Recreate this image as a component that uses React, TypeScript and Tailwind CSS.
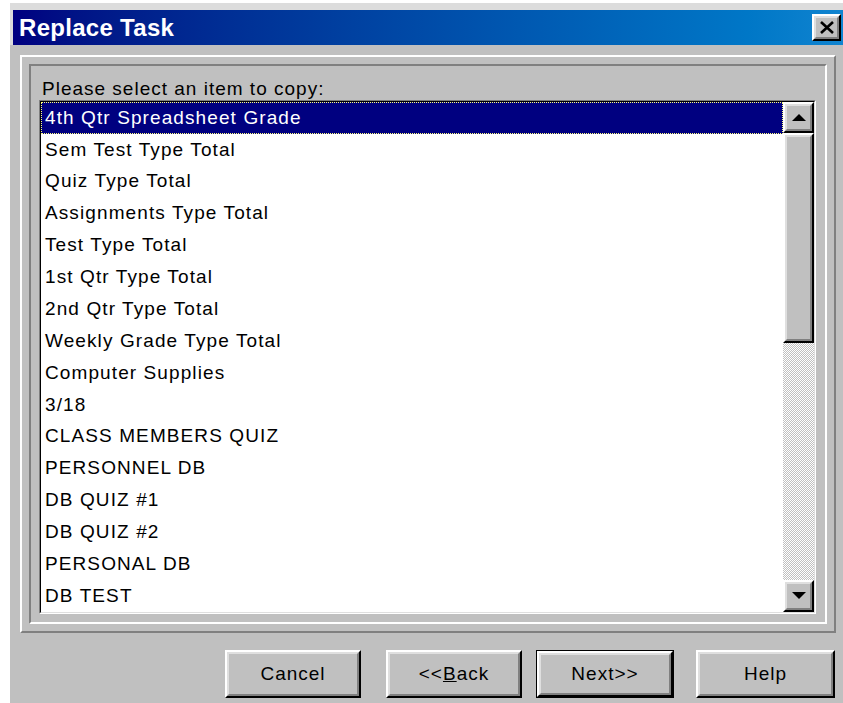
import React from "react";

const items = [
  "4th Qtr Spreadsheet Grade",
  "Sem Test Type Total",
  "Quiz Type Total",
  "Assignments Type Total",
  "Test Type Total",
  "1st Qtr Type Total",
  "2nd Qtr Type Total",
  "Weekly Grade Type Total",
  "Computer Supplies",
  "3/18",
  "CLASS MEMBERS QUIZ",
  "PERSONNEL DB",
  "DB QUIZ #1",
  "DB QUIZ #2",
  "PERSONAL DB",
  "DB TEST",
];

// classic raised 3d bevel used for buttons and scrollbar parts
const Raised = ({
  className = "",
  children,
}: {
  className?: string;
  children?: React.ReactNode;
}) => (
  <div
    className={`border-2 border-t-white border-l-white border-r-black border-b-black bg-[#c0c0c0] ${className}`}
  >
    <div className="flex h-full w-full items-center justify-center border-2 border-t-[#dfdfdf] border-l-[#dfdfdf] border-r-[#808080] border-b-[#808080]">
      {children}
    </div>
  </div>
);

const Arrow = ({ down }: { down?: boolean }) => (
  <svg width="14" height="8" viewBox="0 0 14 8">
    {down ? (
      <polygon points="0,0 14,0 7,7" fill="#000" />
    ) : (
      <polygon points="7,0 14,7 0,7" fill="#000" />
    )}
  </svg>
);

const DialogButton = ({
  label,
  width,
  isDefault,
}: {
  label: React.ReactNode;
  width: string;
  isDefault?: boolean;
}) =>
  isDefault ? (
    <div className={`h-[48px] ${width} border border-black`}>
      <Raised className="h-full w-full">
        <span className="text-[19px] tracking-[1px] text-black">{label}</span>
      </Raised>
    </div>
  ) : (
    <Raised className={`h-[48px] ${width}`}>
      <span className="text-[19px] tracking-[1px] text-black">{label}</span>
    </Raised>
  );

export default function App() {
  return (
    <div className="h-[703px] w-[843px] overflow-hidden bg-white pl-[10px] pt-[3px] font-['Liberation_Sans',Arial,sans-serif]">
      <div className="flex h-full flex-col bg-[#c0c0c0]">
        {/* window frame edge + title bar */}
        <div className="bg-[#dcdcdc] pl-[3px] pt-[7px]">
          <div className="flex h-[35px] items-center bg-gradient-to-r from-[#000080] to-[#1084d0] pl-[6px] pr-[2px]">
            <span className="text-[24px] font-bold leading-none tracking-[0.3px] text-white">
              Replace Task
            </span>
            <div className="ml-auto">
              <Raised className="h-[27px] w-[29px]">
                <svg width="14" height="13" viewBox="0 0 14 13">
                  <path
                    d="M1 1 L13 12 M13 1 L1 12"
                    stroke="#000"
                    strokeWidth="2.6"
                  />
                </svg>
              </Raised>
            </div>
          </div>
        </div>

        <div className="pl-[10px] pt-[10px]">
          {/* outer raised panel */}
          <div className="h-[578px] w-[816px] border-2 border-t-white border-l-white border-r-[#808080] border-b-[#808080] p-[7px]">
            {/* inner etched group */}
            <div className="h-full w-full border-2 border-t-[#808080] border-l-[#808080] border-r-white border-b-white pl-[8px] pt-[13px]">
              <div className="ml-[3px] h-[20px] text-[19px] leading-[20px] tracking-[1px] text-black">
                Please select an item to copy:
              </div>
              <div className="mt-[1px] h-[514px] w-[777px] border border-t-[#808080] border-l-[#808080] border-r-white border-b-white">
                <div className="flex h-full w-full border border-t-black border-l-black border-r-[#dfdfdf] border-b-[#dfdfdf] bg-white">
                  <div className="flex w-[742px] flex-col">
                    {items.map((item, i) =>
                      i === 0 ? (
                        <div
                          key={item}
                          className="flex h-[31.875px] items-center border border-dotted border-[#ffff80] bg-[#000080] pl-[3px] text-[19px] tracking-[1.1px] text-white"
                        >
                          {item}
                        </div>
                      ) : (
                        <div
                          key={item}
                          className="flex h-[31.875px] items-center pl-[4px] text-[19px] tracking-[1.1px] text-black"
                        >
                          {item}
                        </div>
                      ),
                    )}
                  </div>

                  {/* vertical scrollbar */}
                  <div className="flex w-[31px] flex-col">
                    <Raised className="h-[31px] w-[31px]">
                      <Arrow />
                    </Raised>
                    <Raised className="h-[210px] w-[31px]" />
                    <div className="flex-1 bg-[repeating-conic-gradient(#c0c0c0_0_25%,#ffffff_0_50%)] bg-[length:2px_2px]" />
                    <Raised className="h-[32px] w-[31px]">
                      <Arrow down />
                    </Raised>
                  </div>
                </div>
              </div>
            </div>
          </div>

          {/* dialog buttons */}
          <div className="ml-[205px] mt-[17px] flex items-center">
            <DialogButton label="Cancel" width="w-[136px]" />
            <div className="ml-[25px]">
              <DialogButton
                label={
                  <>
                    &lt;&lt;<span className="underline">B</span>ack
                  </>
                }
                width="w-[136px]"
              />
            </div>
            <div className="ml-[14px]">
              <DialogButton label="Next>>" width="w-[138px]" isDefault />
            </div>
            <div className="ml-[22px]">
              <DialogButton label="Help" width="w-[139px]" />
            </div>
          </div>
        </div>
      </div>
    </div>
  );
}
